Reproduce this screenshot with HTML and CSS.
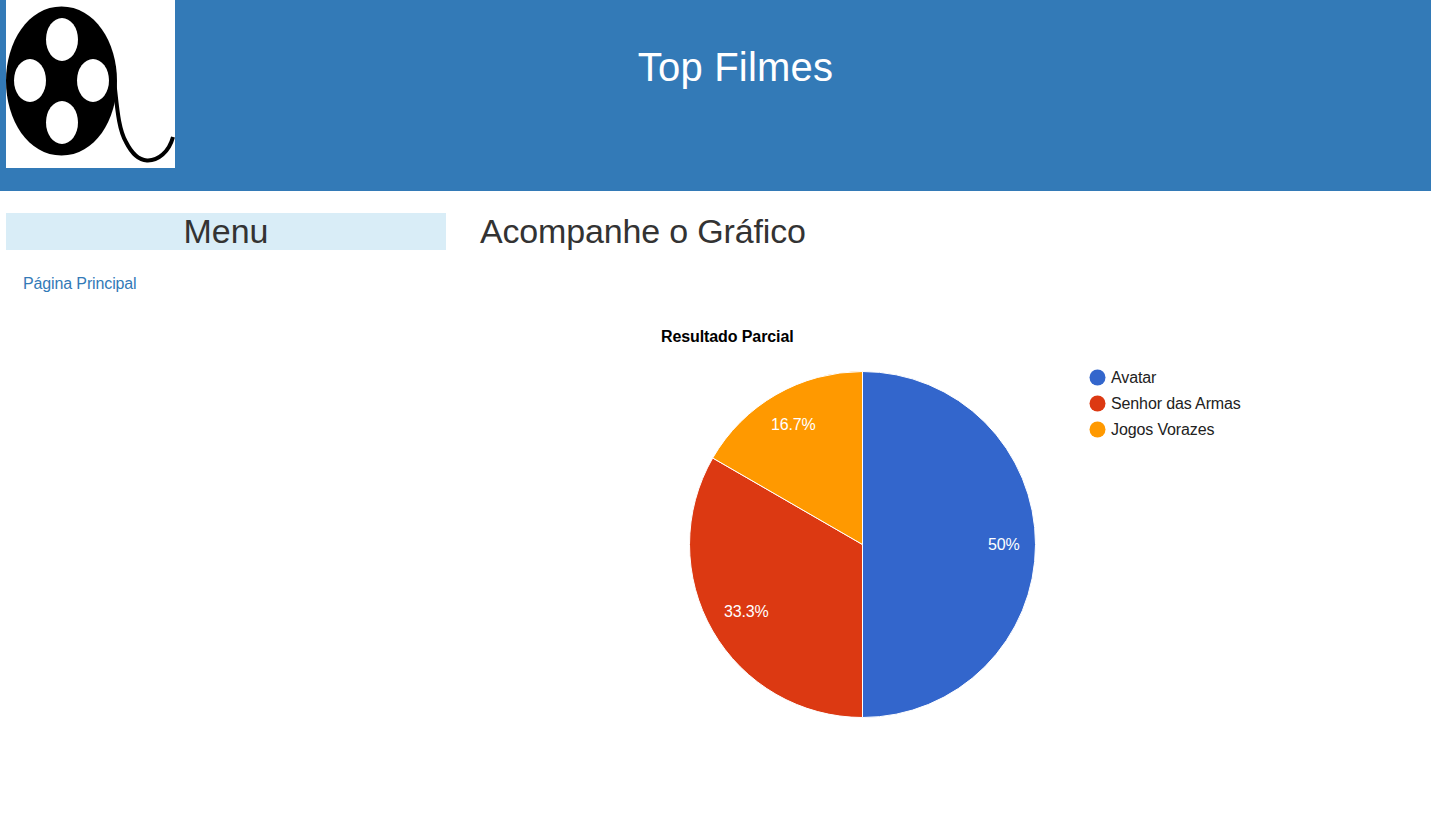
FILE: index.html
```html
<!DOCTYPE html>
<html>
<head>
	<meta charset="utf-8">
	<meta name="viewport" content="width=device-width, initial-scale=1">
	<title>Top Filmes</title>
	<link rel="stylesheet" href="styles.css">
</head>
<body>
	<header class="topo">
		<svg class="logo" width="169" height="168" viewBox="0 0 169 168">
			<rect width="169" height="168" fill="#fff"/>
			<path d="M108 80 C111 105 112 128 120 142 C126 154 133 160 141 160.500 C152 161 163 152 167 137" fill="none" stroke="#000" stroke-width="4"/>
			<path d="M55.500 6.500 C89 6.500 111 42 111 81 C111 120 89 155.500 55.500 155.500 C22 155.500 0 120 0 81 C0 42 22 6.500 55.500 6.500 Z" fill="#000"/>
			<ellipse cx="56" cy="39.500" rx="16" ry="21.500" fill="#fff"/>
			<ellipse cx="56" cy="122.500" rx="16" ry="21.500" fill="#fff"/>
			<ellipse cx="24" cy="80.500" rx="16" ry="21.500" fill="#fff"/>
			<ellipse cx="87" cy="80.500" rx="16" ry="21.500" fill="#fff"/>
		</svg>
		<h1 class="titulo">Top Filmes</h1>
	</header>
	<div class="principal">
		<aside class="menu">
			<h2 class="menu-titulo">Menu</h2>
			<ul class="menu-lista">
				<li><a href="#">Página Principal</a></li>
			</ul>
		</aside>
		<main class="conteudo">
			<h2 class="conteudo-titulo">Acompanhe o Gráfico</h2>
			<svg class="grafico" width="951" height="520" viewBox="480 311 951 520">
				<text class="grafico-titulo" x="661" y="342">Resultado Parcial</text>
				<path d="M862.500 371.500 A173 173 0 0 1 862.500 717.500 L862.500 544.500 Z" fill="#3366cc" stroke="#fff"/>
				<path d="M862.500 717.500 A173 173 0 0 1 712.700 458 L862.500 544.500 Z" fill="#dc3912" stroke="#fff"/>
				<path d="M712.700 458 A173 173 0 0 1 862.500 371.500 L862.500 544.500 Z" fill="#ff9900" stroke="#fff"/>
				<text class="fatia" x="988" y="550">50%</text>
				<text class="fatia" x="724" y="617">33.3%</text>
				<text class="fatia" x="771" y="430">16.7%</text>
				<circle cx="1097.500" cy="377.500" r="8" fill="#3366cc"/>
				<text class="legenda" x="1111" y="383">Avatar</text>
				<circle cx="1097.500" cy="403.500" r="8" fill="#dc3912"/>
				<text class="legenda" x="1111" y="409">Senhor das Armas</text>
				<circle cx="1097.500" cy="429.500" r="8" fill="#ff9900"/>
				<text class="legenda" x="1111" y="435">Jogos Vorazes</text>
			</svg>
		</main>
	</div>
</body>
</html>
```

FILE: styles.css
```css
* {
	box-sizing: border-box;
}
html, body {
	height: 100%;
}
body {
	margin: 0;
	overflow: hidden;
	background: #fff;
	color: #333;
	font-family: "Liberation Sans", Arial, sans-serif;
	font-size: 14px;
	line-height: 20px;
}
.topo {
	display: flex;
	height: 191px;
	padding-left: 6px;
	background: #337ab7;
}
.logo {
	display: block;
	flex: none;
}
.titulo {
	flex: 1;
	margin: 0;
	padding: 45px 135px 0 0;
	color: #fff;
	font-size: 40px;
	font-weight: 400;
	letter-spacing: 0.2px;
	line-height: 44px;
	text-align: center;
}
.principal {
	display: flex;
	padding: 22px 0 0 6px;
}
.menu {
	flex: none;
	width: 440px;
}
.menu-titulo {
	margin: 0;
	background: #d9edf7;
	font-size: 34px;
	font-weight: 400;
	line-height: 37px;
	text-align: center;
}
.menu-lista {
	margin: 0;
	padding: 24px 0 0 17px;
	list-style: none;
}
.menu-lista a {
	color: #337ab7;
	font-size: 16px;
	letter-spacing: -0.13px;
	text-decoration: none;
}
.conteudo {
	flex: 1;
	padding-left: 34px;
}
.conteudo-titulo {
	margin: 0;
	font-size: 34px;
	font-weight: 400;
	letter-spacing: -0.16px;
	line-height: 37px;
}
.grafico {
	display: block;
	margin: 61px 0 0 0;
}
.grafico-titulo {
	fill: #000;
	font-size: 16px;
	font-weight: 700;
	letter-spacing: -0.1px;
}
.fatia {
	fill: #fff;
	font-size: 16px;
	letter-spacing: -0.15px;
}
.legenda {
	fill: #222;
	font-size: 16px;
	letter-spacing: -0.12px;
}
```
